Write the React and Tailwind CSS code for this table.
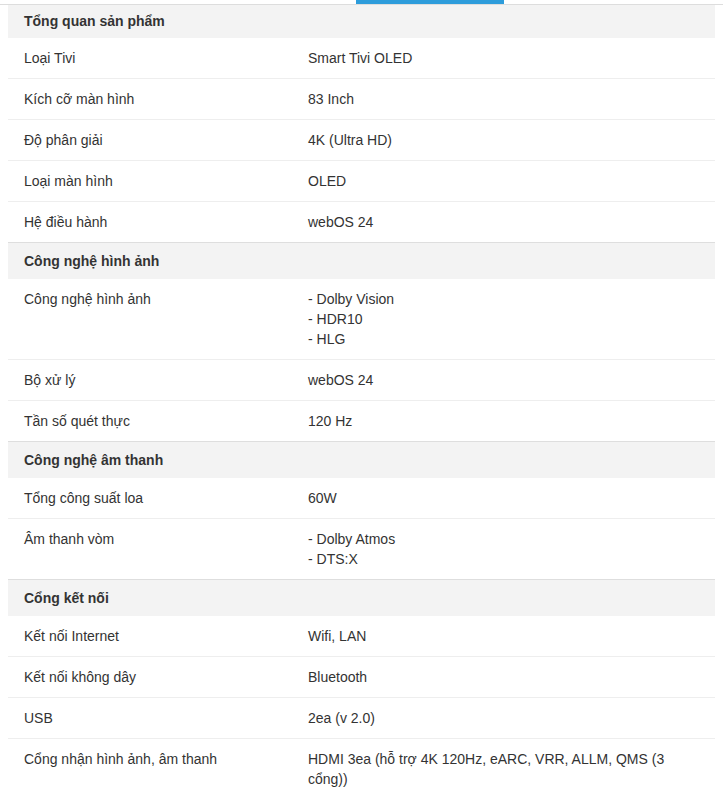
import React from 'react'

const sections = [
  {
    title: 'Tổng quan sản phẩm',
    first: true,
    rows: [
      ['Loại Tivi', ['Smart Tivi OLED']],
      ['Kích cỡ màn hình', ['83 Inch']],
      ['Độ phân giải', ['4K (Ultra HD)']],
      ['Loại màn hình', ['OLED']],
      ['Hệ điều hành', ['webOS 24']],
    ],
  },
  {
    title: 'Công nghệ hình ảnh',
    rows: [
      ['Công nghệ hình ảnh', ['- Dolby Vision', '- HDR10', '- HLG']],
      ['Bộ xử lý', ['webOS 24']],
      ['Tần số quét thực', ['120 Hz']],
    ],
  },
  {
    title: 'Công nghệ âm thanh',
    rows: [
      ['Tổng công suất loa', ['60W']],
      ['Âm thanh vòm', ['- Dolby Atmos', '- DTS:X']],
    ],
  },
  {
    title: 'Cổng kết nối',
    rows: [
      ['Kết nối Internet', ['Wifi, LAN']],
      ['Kết nối không dây', ['Bluetooth']],
      ['USB', ['2ea (v 2.0)']],
      ['Cổng nhận hình ảnh, âm thanh', ['HDMI 3ea (hỗ trợ 4K 120Hz, eARC, VRR, ALLM, QMS (3 cổng))']],
    ],
  },
]

const SpecRow = ({ label, values, last }) => (
  <div className={`flex text-[14px] leading-5 text-[#333] ${last ? '' : 'border-b border-[#eeeeee]'}`}>
    <div className="w-[300px] shrink-0 pl-4 py-[10px]">{label}</div>
    <div className="flex-1 pr-4 py-[10px]">
      {values.map((v, i) => (
        <div key={i}>{v}</div>
      ))}
    </div>
  </div>
)

const App = () => {
  return (
    <div className="w-[723px] min-h-[796px] bg-white font-['Liberation_Sans',Arial,sans-serif]">
      {/* tab strip */}
      <div className="h-[5px] border-b border-[#dddddd]">
        <div className="ml-[356px] w-[148px] h-[4px] bg-[#2d9cdb]" />
      </div>

      <div className="mx-2">
        {sections.map((section) => (
          <div key={section.title}>
            {section.first ? (
              <div className="h-[33px] bg-[#f3f3f3] pl-4 pt-[6px] text-[14px] leading-5 font-bold text-[#333]">
                {section.title}
              </div>
            ) : (
              <div className="h-[37px] border-t border-[#dedede] bg-[#f3f3f3] pl-4 flex items-center text-[14px] leading-5 font-bold text-[#333]">
                {section.title}
              </div>
            )}
            {section.rows.map(([label, values], i) => (
              <SpecRow key={label} label={label} values={values} last={i === section.rows.length - 1} />
            ))}
          </div>
        ))}
      </div>
    </div>
  )
}

export default App
